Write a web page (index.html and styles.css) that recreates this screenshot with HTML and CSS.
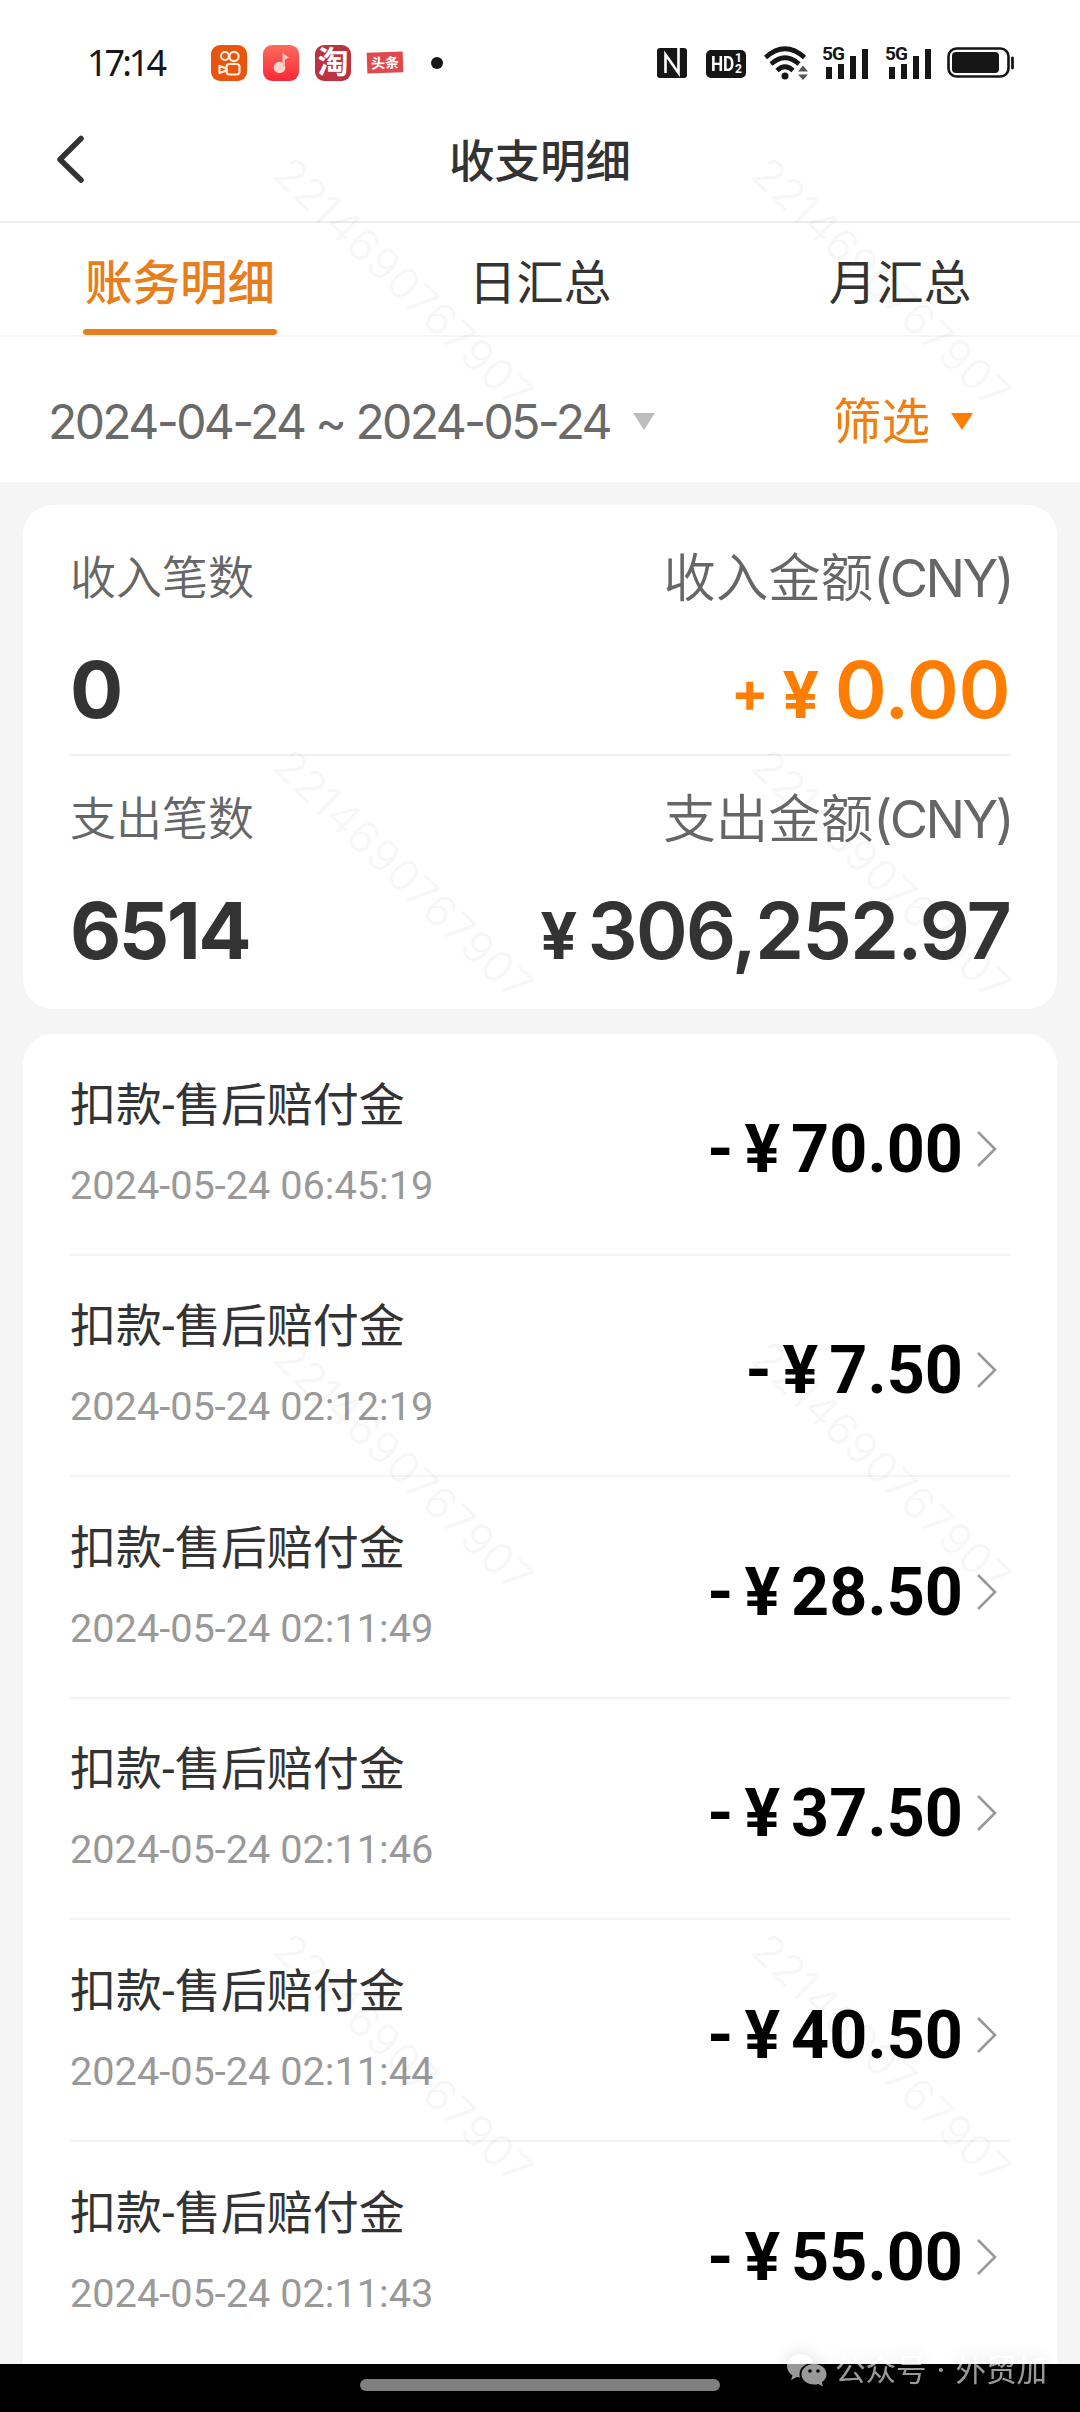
FILE: index.html
```html
<!DOCTYPE html>
<html lang="zh-CN">
<head>
  <meta charset="UTF-8" />
  <meta name="viewport" content="width=device-width, initial-scale=1" />
  <title>收支明细</title>
  <link rel="stylesheet" href="styles.css">
</head>
<body>
  <div class="status-bar">
    <span class="clock">17:14</span>
    <div class="app-icons">
      <svg width="36" height="36" viewBox="0 0 36 36">
        <rect width="36" height="36" rx="9" fill="#e8550f" />
        <g fill="none" stroke="#ffeede" stroke-width="2.2" stroke-linejoin="round">
          <circle cx="14" cy="11" r="4" />
          <circle cx="23" cy="11.5" r="4.600" />
          <rect x="15.500" y="19" width="13" height="10.500" rx="3" />
          <path d="M8.500 21v7l7-2.500v-2z" />
        </g>
      </svg>
      <svg width="36" height="36" viewBox="0 0 36 36">
        <defs>
          <linearGradient id="music" x1="0" y1="0" x2="0" y2="1">
            <stop offset="0" stop-color="#fd6a5c" />
            <stop offset="1" stop-color="#fb2838" />
          </linearGradient>
        </defs>
        <rect width="36" height="36" rx="9" fill="url(#music)" />
        <circle cx="16.500" cy="22.500" r="5.800" fill="#ffd3cc" />
        <path d="M19.500 22V8l6.500 4.500-4 2V22z" fill="#ffc2ba" />
      </svg>
      <span class="app-taobao">淘</span>
      <span class="app-toutiao">头条</span>
      <span class="dot"></span>
    </div>
    <div class="sys-icons">
      <svg class="nfc" width="30" height="30" viewBox="0 0 30 30">
        <rect width="30" height="30" rx="3" fill="#161616" />
        <path d="M8.500 25V6.500l8.500 12M21.500 0v25L13 13" fill="none" stroke="#fff" stroke-width="2.600" />
      </svg>
      <div class="hd"><b>HD</b><span><i>1</i><i>2</i></span></div>
      <svg class="wifi" width="46" height="36" viewBox="0 0 46 36">
        <g fill="none" stroke="#161616" stroke-width="4.600">
          <path d="M1.500 12.500Q21 -5 40.500 12.500" />
          <path d="M7 19Q21 6.500 35 19" />
          <path d="M13 25.500Q21 18 29 25.500" />
        </g>
        <circle cx="21" cy="31" r="3.500" fill="#161616" />
        <path d="M34 26.500l5-6 5 6zM34 29.500l5 5.500 5-5.500z" fill="#555" />
      </svg>
      <div class="signal">
        <svg width="46" height="36" viewBox="0 0 46 36">
          <path d="M4 22h6v12H4zM16 19h6v15h-6zM28 11h6v23h-6zM40 4h6v30h-6z" fill="#161616" />
        </svg>
        <span>5G</span>
      </div>
      <div class="signal">
        <svg width="46" height="36" viewBox="0 0 46 36">
          <path d="M4 22h6v12H4zM16 19h6v15h-6zM28 11h6v23h-6zM40 4h6v30h-6z" fill="#161616" />
        </svg>
        <span>5G</span>
      </div>
      <svg width="68" height="32" viewBox="0 0 68 32">
        <rect x="1.500" y="1.500" width="60" height="28" rx="8" fill="#fff" stroke="#161616" stroke-width="2.600" />
        <rect x="5" y="5" width="47" height="21" rx="4" fill="#161616" />
        <path d="M65.500 11v10" stroke="#161616" stroke-width="2.800" stroke-linecap="round" />
      </svg>
    </div>
  </div>

  <header>
    <svg class="back" width="30" height="50" viewBox="0 0 30 50">
      <path d="M27 4.500L6 25.500 27 46" fill="none" stroke="#333" stroke-width="5.500" stroke-linecap="round" stroke-linejoin="round" />
    </svg>
    <h1>收支明细</h1>
  </header>

  <nav>
    <a class="active">账务明细</a>
    <a>日汇总</a>
    <a>月汇总</a>
  </nav>

  <div class="filter-bar">
    <div class="date-range">
      <span>2024-04-24 ~ 2024-05-24</span>
      <i class="arrow"></i>
    </div>
    <div class="filter">
      <span>筛选</span>
      <i class="arrow"></i>
    </div>
  </div>

  <main>
    <section class="summary">
      <div class="summary-row">
        <div class="labels"><span>收入笔数</span><span class="big">收入金额<b>(CNY)</b></span></div>
        <div class="values">
          <span>0</span>
          <span class="amount income"><small class="sign">+</small><small>¥</small><span>0.00</span></span>
        </div>
      </div>
      <div class="summary-row">
        <div class="labels"><span>支出笔数</span><span class="big">支出金额<b>(CNY)</b></span></div>
        <div class="values">
          <span class="count">6514</span>
          <span class="amount total"><small>¥</small><span>306,252.97</span></span>
        </div>
      </div>
    </section>
    <section id="recordList" class="records"></section>
  </main>

  <footer>
    <div class="home-pill"></div>
  </footer>

  <div class="account-tag">
    <svg width="42" height="34" viewBox="0 0 42 34">
      <path d="M15.500 1C7 1 1 6.500 1 13c0 4 2 7 5.500 9.500L5 27l6-3c1 .3 2 .5 3 .6-.3-1-.5-2.100-.5-3.300 0-6.300 6-11.300 14-12C25.500 4.200 21 1 15.500 1z" fill="#fff" />
      <path d="M28 11c-7 0-12.500 4.600-12.500 10.300S21 31.500 28 31.500c1.500 0 3-.2 4.300-.6L37 33.500l-1.200-4.200c2.900-1.900 4.700-4.700 4.700-8C40.500 15.600 35 11 28 11z" fill="#fff" />
      <circle cx="24" cy="18" r="1.800" fill="#000" />
      <circle cx="32" cy="18" r="1.800" fill="#000" />
    </svg>
    <span>公众号 · 外贸加</span>
  </div>

  <div id="watermarks" class="watermarks"></div>

  <script>
    const records = [
      { time: '2024-05-24 06:45:19', amount: '70.00' },
      { time: '2024-05-24 02:12:19', amount: '7.50' },
      { time: '2024-05-24 02:11:49', amount: '28.50' },
      { time: '2024-05-24 02:11:46', amount: '37.50' },
      { time: '2024-05-24 02:11:44', amount: '40.50' },
      { time: '2024-05-24 02:11:43', amount: '55.00' }
    ];
    const recordList = document.getElementById('recordList');
    records.forEach((record) => {
      const row = document.createElement('div');
      row.className = 'record';
      row.innerHTML = `
        <div class="record-info">
          <div class="record-title">扣款-售后赔付金</div>
          <div class="record-time">${record.time}</div>
        </div>
        <div class="record-amount"><span class="minus">-</span><span class="yen">¥</span><span>${record.amount}</span></div>
        <svg class="more" width="22" height="38" viewBox="0 0 22 38">
          <path d="M2 2l17 17L2 36" fill="none" stroke="#999" stroke-width="2.600" />
        </svg>
      `;
      recordList.appendChild(row);
    });

    const watermarks = document.getElementById('watermarks');
    for (let i = 0; i < 8; i++) {
      const mark = document.createElement('div');
      mark.innerHTML = '<span>2214690767907</span>';
      watermarks.appendChild(mark);
    }
  </script>
</body>
</html>
```
FILE: styles.css
```css
* {
  box-sizing: border-box;
}
body {
  margin: 0;
  height: 2412px;
  display: flex;
  flex-direction: column;
  overflow: hidden;
  position: relative;
  font-family: Inter, 'Noto Sans CJK SC', sans-serif;
  background-color: #fff;
  color: #333;
}
svg {
  display: block;
  flex: none;
}
i {
  font-style: normal;
}
.status-bar {
  height: 125px;
  padding: 0 65px 0 87px;
  display: flex;
  align-items: center;
}
.clock {
  width: 124px;
  font-family: 'Noto Sans', sans-serif;
  font-size: 36px;
  letter-spacing: -3px;
  color: #161616;
}
.app-icons {
  display: flex;
  align-items: center;
  gap: 16px;
}
.app-taobao {
  width: 36px;
  height: 36px;
  border-radius: 9px;
  background: #bb3340;
  color: #fff;
  font-size: 31px;
  font-weight: 700;
  line-height: 34px;
  text-align: center;
}
.app-toutiao {
  width: 36px;
  height: 21px;
  background: #e2494c;
  color: #fff;
  font-size: 14px;
  font-weight: 700;
  line-height: 21px;
  text-align: center;
  transform: rotate(-2deg);
}
.dot {
  width: 12px;
  height: 12px;
  margin-left: 12px;
  border-radius: 50%;
  background: #161616;
}
.sys-icons {
  margin-left: auto;
  display: flex;
  align-items: center;
}
.hd {
  width: 40px;
  height: 28px;
  margin: 2px 18px 0 19px;
  border-radius: 5px;
  background: #161616;
  color: #fff;
  display: flex;
  align-items: center;
  justify-content: center;
  font-family: Roboto, sans-serif;
  font-size: 20px;
}
.hd b {
  transform: scaleX(0.86);
  margin: 0 -1px;
}
.hd span {
  display: flex;
  flex-direction: column;
  font-size: 12px;
  font-weight: 700;
  line-height: 11px;
}
.signal {
  position: relative;
  margin-left: 14px;
}
.wifi + .signal {
  margin-left: 12px;
}
.signal + .signal {
  margin-left: 17px;
  margin-right: 16px;
}
.signal span {
  position: absolute;
  left: 0;
  top: 0;
  padding-right: 1px;
  font-family: Roboto, sans-serif;
  font-size: 19px;
  font-weight: 700;
  line-height: 17px;
  letter-spacing: -1px;
  color: #161616;
  background: #fff;
}
header {
  height: 98px;
  padding: 0 54px;
  display: flex;
  align-items: center;
  border-bottom: 2px solid #ededed;
}
header .back {
  margin-bottom: 29px;
}
h1 {
  flex: 1;
  margin: 0 30px 23px 0;
  font-size: 45.500px;
  font-weight: 500;
  line-height: 60px;
  text-align: center;
}
nav {
  height: 114px;
  display: flex;
  border-bottom: 2px solid #f5f5f5;
}
nav a {
  flex: 1;
  display: flex;
  justify-content: center;
  font-size: 47.500px;
  line-height: 120px;
}
nav a.active {
  color: #e87d1b;
  font-weight: 500;
  position: relative;
}
nav a.active::after {
  content: '';
  position: absolute;
  left: 83px;
  bottom: 0;
  width: 194px;
  height: 6px;
  border-radius: 3px;
  background: #e87d1b;
}
.filter-bar {
  height: 145px;
  padding: 24px 107px 0 48px;
  display: flex;
  align-items: center;
  justify-content: space-between;
}
.date-range,
.filter {
  display: flex;
  align-items: center;
}
.date-range {
  color: #6a6a6a;
  font-size: 48px;
  font-weight: 400;
  letter-spacing: -2.600px;
  gap: 23px;
}
.filter {
  color: #f07f13;
  font-size: 48.500px;
  line-height: 60px;
  gap: 21px;
}
.arrow {
  border: 11px solid transparent;
  border-top: 17px solid #bdbdbd;
  border-bottom: 0;
}
.filter .arrow {
  border-top-color: #ff7d00;
}
main {
  flex: 1;
  padding: 23px 23px 0;
  display: flex;
  flex-direction: column;
  background: #f5f5f5;
}
.summary,
.records {
  padding: 0 47px;
  border-radius: 30px;
  background: #fff;
}
.summary {
  height: 504px;
  margin-bottom: 25px;
}
.summary-row {
  height: 249px;
  padding-top: 33px;
}
.summary-row + .summary-row {
  padding-top: 23px;
  border-top: 2px solid #f0f0f0;
}
.labels,
.values {
  display: flex;
  align-items: center;
  justify-content: space-between;
}
.labels {
  height: 72px;
  color: #666;
  font-size: 46px;
  font-weight: 350;
  white-space: nowrap;
}
.labels .big {
  font-size: 52.500px;
}
.labels b {
  font-weight: 400;
  letter-spacing: -2.600px;
  margin-right: -2px;
}
.values {
  height: 100px;
  margin-top: 29px;
  align-items: baseline;
  font-size: 79px;
  font-weight: 700;
  line-height: 100px;
}
.count {
  letter-spacing: -2.500px;
}
.amount {
  display: flex;
  align-items: baseline;
  font-weight: 600;
}
.amount small {
  margin-right: 12px;
  font-size: 65px;
  font-weight: 700;
}
.income small {
  margin-right: 16px;
}
.income small.sign {
  margin-right: 14px;
  font-size: 56px;
  transform: translateY(-6px);
}
.income {
  color: #ff7d00;
  letter-spacing: -0.500px;
}
.total {
  letter-spacing: -2px;
}
.records {
  flex: 1;
  border-radius: 30px 30px 0 0;
}
.record {
  height: 221.500px;
  display: flex;
  align-items: center;
  border-bottom: 2px solid #f4f4f4;
}
.record:last-child {
  border-bottom: 0;
}
.record-info {
  flex: 1;
}
.record-title {
  font-family: Roboto, 'Noto Sans CJK SC', sans-serif;
  font-size: 46px;
  line-height: 60px;
}
.record-time {
  margin-top: 24px;
  font-family: Roboto, sans-serif;
  font-size: 39.700px;
  line-height: 54px;
  color: #999;
}
.record-amount {
  padding-top: 10px;
  display: flex;
  font-family: Roboto, sans-serif;
  font-size: 66.500px;
  font-weight: 700;
  color: #000;
}
.minus {
  margin-right: 11px;
}
.yen {
  margin-right: 11px;
}
.more {
  margin: 10px 12px 0 13px;
}
footer {
  height: 48px;
  padding-top: 15px;
  background: #000;
}
.home-pill {
  width: 360px;
  height: 12px;
  margin: 0 auto;
  border-radius: 6px;
  background: #808080;
}
.account-tag {
  position: absolute;
  right: 33px;
  bottom: 22px;
  display: flex;
  align-items: center;
  gap: 7px;
  color: #fff;
  font-size: 30.500px;
  line-height: 40px;
  word-spacing: 1.500px;
  opacity: 0.6;
  filter: drop-shadow(0 0 9px rgba(0, 0, 0, 0.25));
}
.watermarks {
  position: absolute;
  left: 165px;
  top: -13px;
  width: 960px;
  display: grid;
  grid-template-columns: repeat(2, 478px);
  grid-auto-rows: 592px;
  pointer-events: none;
}
.watermarks div {
  display: flex;
  align-items: center;
  justify-content: center;
}
.watermarks span {
  font-size: 44px;
  font-weight: 400;
  letter-spacing: 0.200px;
  color: rgba(0, 0, 0, 0.035);
  transform: rotate(44deg);
}
```
